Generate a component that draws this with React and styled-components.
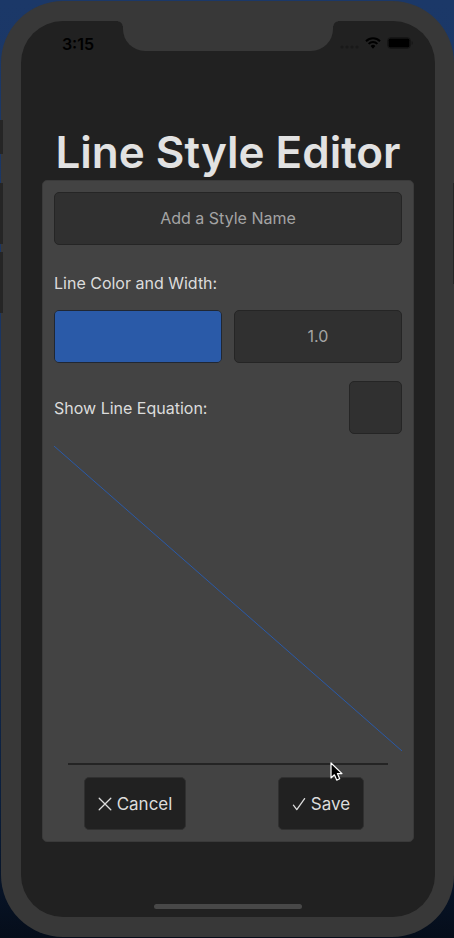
import React, { useState } from "react";
import styled, { createGlobalStyle } from "styled-components";

const GlobalStyle = createGlobalStyle`
  *, *::before, *::after { box-sizing: border-box; }
  body {
    margin: 0;
    background: #0a1a33;
    font-family: Inter, "Liberation Sans", sans-serif;
    color: #dcdcdc;
  }
`;

const Desktop = styled.div`
  position: relative;
  display: flex;
  min-height: 100vh;
  padding: 1px 0 1px 1px;
  background: linear-gradient(#1b3868, #1a3460 50%, #0b1f3d 85%, #050d1a);
`;

const SideKey = styled.span`
  position: absolute;
  top: ${(p) => p.$top}px;
  ${(p) => (p.$right ? "right: 0;" : "left: 0;")}
  width: ${(p) => (p.$right ? 1 : 3)}px;
  height: ${(p) => p.$length}px;
  background: #252525;
`;

const Phone = styled.div`
  display: flex;
  flex: 1;
  min-width: 0;
  padding: 20px 19px 20px 20px;
  border-radius: 62px;
  background: #383838;
`;

const Screen = styled.div`
  display: flex;
  flex: 1;
  min-width: 0;
  flex-direction: column;
  border-radius: 42px;
  background: #212121;
`;

const StatusBar = styled.header`
  display: grid;
  grid-template-columns: 1fr 210px 1fr;
  height: 30px;
  color: #000;
`;

const Time = styled.time`
  padding: 14px 0 0 12px;
  text-align: center;
  font-size: 16px;
  font-weight: 600;
  line-height: 18px;
`;

const Notch = styled.div`
  position: relative;
  height: 30px;
  border-radius: 0 0 22px 22px;
  background: #383838;

  &::before,
  &::after {
    content: "";
    position: absolute;
    top: 0;
    width: 5px;
    height: 5px;
  }
  &::before {
    right: 100%;
    background: radial-gradient(circle at 0 100%, transparent 4px, #383838 5px);
  }
  &::after {
    left: 100%;
    background: radial-gradient(circle at 100% 100%, transparent 4px, #383838 5px);
  }
`;

const Indicators = styled.div`
  display: flex;
  align-items: center;
  gap: 6px;
  height: 16px;
  margin: 14px 0 0 7px;
`;

const Title = styled.h1`
  margin: 74px 0 0;
  text-align: center;
  white-space: nowrap;
  font-size: 44px;
  font-weight: 600;
  line-height: 55px;
  color: #e2e2e2;
`;

const Panel = styled.form`
  display: flex;
  flex: 1;
  flex-direction: column;
  margin: 0 21px;
  padding: 11px;
  border: 1px solid #3a3a3a;
  border-radius: 5px;
  background: #434343;
`;

const Field = styled.input`
  width: 100%;
  min-width: 0;
  height: 53px;
  padding: 0 12px 2px;
  border: 1px solid #252525;
  border-radius: 5px;
  background: #303030;
  color: #a4a4a4;
  font: inherit;
  font-size: 16px;
  text-align: center;
  &::placeholder { color: #a4a4a4; opacity: 1; }
`;

const Caption = styled.label`
  font-size: 16px;
  line-height: 20px;
  color: #dcdcdc;
`;

const Group = styled.div`
  display: flex;
  flex-direction: column;
  gap: 17px;
  margin-top: 28px;
`;

const Pair = styled.div`
  display: grid;
  grid-template-columns: 1fr 1fr;
  gap: 12px;
`;

const ColorField = styled.input`
  appearance: none;
  width: 100%;
  height: 53px;
  padding: 0;
  border: 1px solid #202733;
  border-radius: 5px;
  background: #2a5aa8;
  overflow: hidden;
  &::-webkit-color-swatch-wrapper { padding: 0; }
  &::-webkit-color-swatch { border: 0; border-radius: 0; }
`;

const CheckRow = styled.div`
  display: flex;
  align-items: center;
  justify-content: space-between;
  margin-top: 18px;
`;

const Check = styled.input`
  appearance: none;
  width: 53px;
  height: 53px;
  margin: 0;
  border: 1px solid #252525;
  border-radius: 5px;
  background: #303030;
  &:checked { background: #2a5aa8; }
`;

const Preview = styled.svg`
  display: block;
  flex: 1;
  width: 100%;
  min-height: 200px;
  margin: 12px 0;
`;

const Divider = styled.div`
  position: relative;
  height: 2px;
  margin: 0 14px;
  background: #242424;
`;

const Pointer = styled.svg`
  position: absolute;
  top: -1px;
  left: 82%;
`;

const Actions = styled.div`
  display: grid;
  grid-template-columns: 1fr 1fr;
  gap: 24px;
  justify-items: center;
  margin-top: 12px;
`;

const Action = styled.button`
  display: flex;
  align-items: center;
  gap: 5px;
  height: 53px;
  padding: 0 13px;
  border: 1px solid #303030;
  border-radius: 5px;
  background: #212121;
  color: #dcdcdc;
  font: inherit;
  font-size: 17px;
`;

const HomeArea = styled.footer`
  display: flex;
  align-items: flex-end;
  justify-content: center;
  height: 75px;
  padding-bottom: 8px;
`;

const HomeBar = styled.span`
  width: 148px;
  height: 5px;
  border-radius: 3px;
  background: #484848;
`;

const Cellular = () => (
  <svg width="19" height="16" viewBox="0 0 19 16" fill="#191919" aria-hidden="true">
    {[2, 7, 12, 17].map((x) => <circle key={x} cx={x} cy="12" r="1.5" />)}
  </svg>
);

const Wifi = () => (
  <svg width="16" height="12" viewBox="0 0 16 12" aria-hidden="true">
    <path d="M1 4.2a10 10 0 0 1 14 0M3.6 6.9a6.3 6.3 0 0 1 8.8 0" fill="none" stroke="currentColor" strokeWidth="2" />
    <path d="M5.6 9a3.5 3.5 0 0 1 4.8 0L8 11.8Z" fill="currentColor" />
  </svg>
);

const Battery = () => (
  <svg width="26" height="12" viewBox="0 0 26 12" aria-hidden="true">
    <rect x=".5" y=".5" width="23" height="11" rx="3.5" fill="none" stroke="#161616" />
    <rect x="1.5" y="1.5" width="21" height="9" rx="1.8" fill="currentColor" />
    <path d="M24.7 4a2.3 2.3 0 0 1 0 4Z" fill="#161616" />
  </svg>
);

const Cross = () => (
  <svg width="14" height="14" viewBox="0 0 14 14" fill="none" stroke="currentColor" strokeWidth="1.3" strokeLinecap="round" aria-hidden="true">
    <path d="m1.2 1.2 11.6 11.6m0-11.6L1.2 12.8" />
  </svg>
);

const Tick = () => (
  <svg width="14" height="14" viewBox="0 0 14 14" fill="none" stroke="currentColor" strokeWidth="1.3" strokeLinecap="round" strokeLinejoin="round" aria-hidden="true">
    <path d="m1.4 8.2 3.4 4.4 7.8-11" />
  </svg>
);

export default function App() {
  const [color, setColor] = useState("#2a5aa8");
  const [showEquation, setShowEquation] = useState(false);

  return (
    <>
      <GlobalStyle />
      <Desktop>
        <Phone>
          <Screen>
            <StatusBar>
              <Time>3:15</Time>
              <Notch />
              <Indicators>
                <Cellular />
                <Wifi />
                <Battery />
              </Indicators>
            </StatusBar>
            <Title>Line Style Editor</Title>
            <Panel onSubmit={(e) => e.preventDefault()}>
              <Field aria-label="Style name" placeholder="Add a Style Name" />
              <Group>
                <Caption htmlFor="line-color">Line Color and Width:</Caption>
                <Pair>
                  <ColorField id="line-color" type="color" value={color} onChange={(e) => setColor(e.target.value)} />
                  <Field aria-label="Line width" inputMode="decimal" placeholder="1.0" />
                </Pair>
              </Group>
              <CheckRow>
                <Caption htmlFor="show-equation">Show Line Equation:</Caption>
                <Check
                  id="show-equation"
                  type="checkbox"
                  checked={showEquation}
                  onChange={(e) => setShowEquation(e.target.checked)}
                />
              </CheckRow>
              <Preview role="img" aria-label="Line preview">
                <line x1="0" y1="0" x2="100%" y2="100%" stroke={color} strokeWidth="1" />
              </Preview>
              <Divider>
                <Pointer width="13" height="20" viewBox="0 0 13 20" aria-hidden="true">
                  <path d="M1 1v15l3.4-3.2 2.3 5.3 3-1.3-2.3-5.2H12Z" fill="#000" stroke="#fff" strokeWidth="1.2" strokeLinejoin="round" />
                </Pointer>
              </Divider>
              <Actions>
                <Action type="button"><Cross />Cancel</Action>
                <Action type="submit"><Tick />Save</Action>
              </Actions>
            </Panel>
            <HomeArea><HomeBar /></HomeArea>
          </Screen>
        </Phone>
        <SideKey $top={120} $length={34} />
        <SideKey $top={183} $length={61} />
        <SideKey $top={252} $length={61} />
        <SideKey $right $top={183} $length={101} />
      </Desktop>
    </>
  );
}
